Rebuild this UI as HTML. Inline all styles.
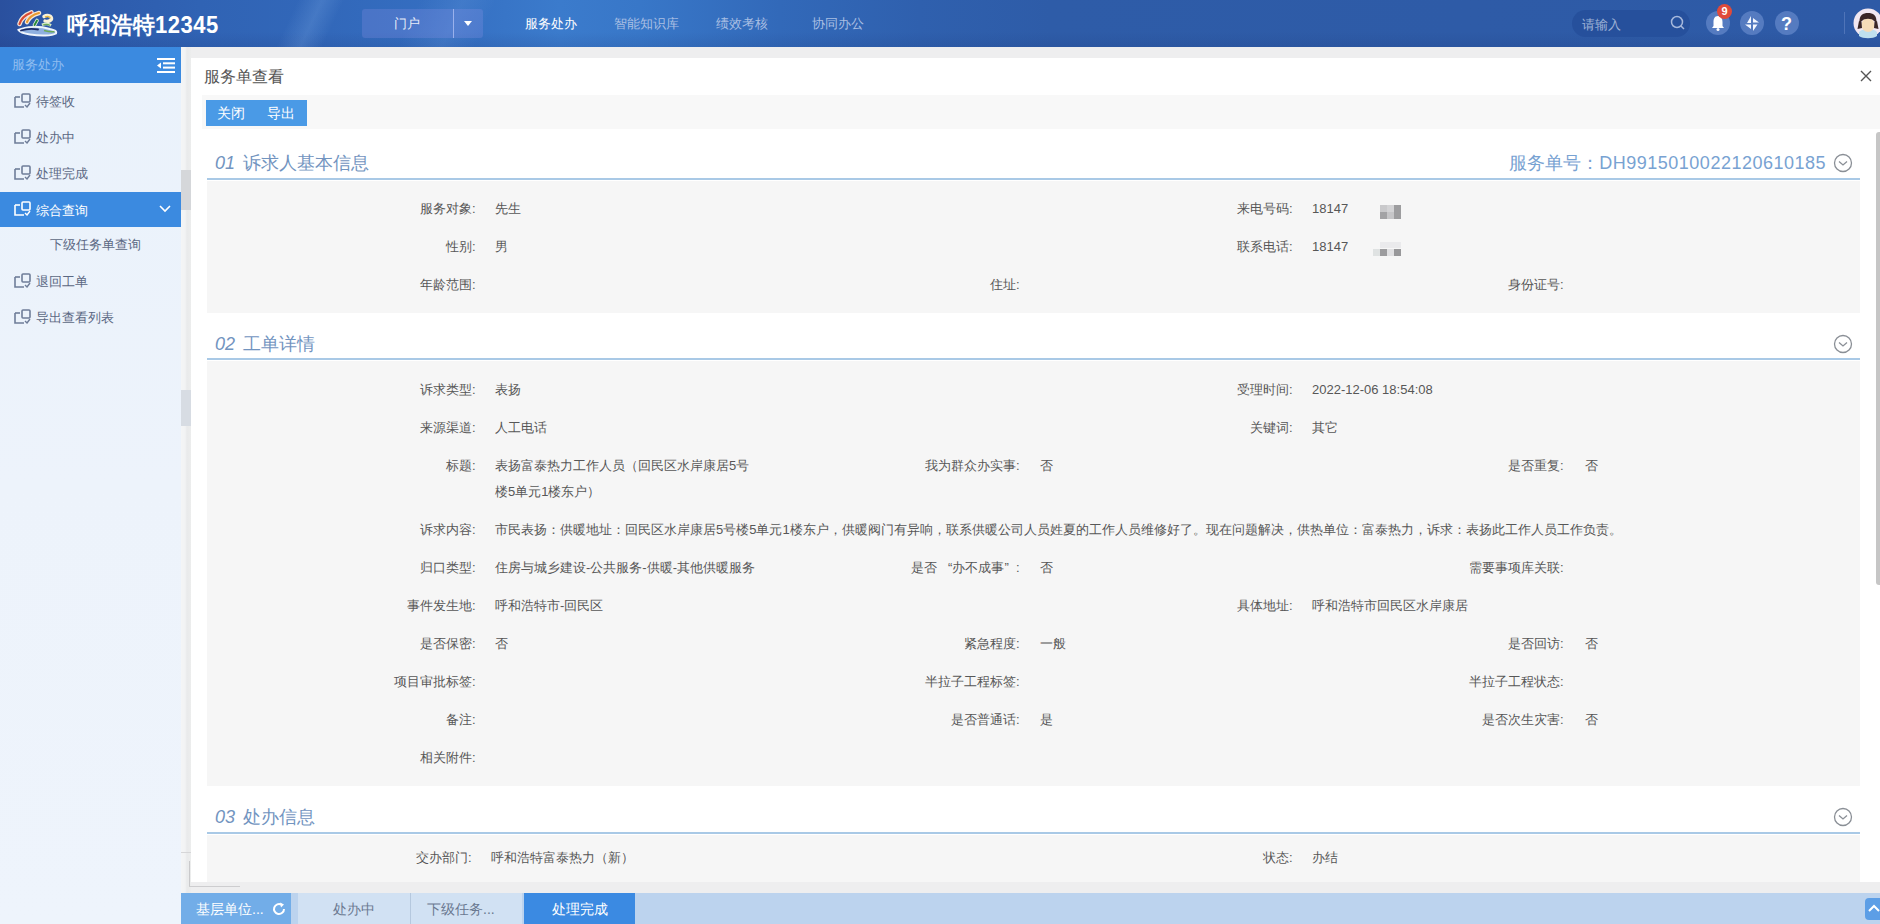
<!DOCTYPE html><html><head><meta charset="utf-8"><style>
*{margin:0;padding:0;box-sizing:border-box}
html,body{width:1880px;height:924px;overflow:hidden;font-family:"Liberation Sans",sans-serif;background:#eef0f3;position:relative}
div,span{position:absolute;white-space:nowrap}
#hdr{left:0;top:0;width:1880px;height:47px;background:linear-gradient(115deg,rgba(255,255,255,0) 270px,rgba(170,210,255,0.16) 292px,rgba(255,255,255,0) 312px),linear-gradient(115deg,rgba(255,255,255,0) 380px,rgba(170,210,255,0.10) 420px,rgba(255,255,255,0) 450px),linear-gradient(180deg,rgba(0,0,0,0) 32px,rgba(20,40,100,0.12) 47px),linear-gradient(90deg,#2a509e 0px,#2d5aab 70px,#3063b4 200px,#3268ba 330px,#356fc2 450px,#3b7bcc 560px,#3877c8 640px,#3269b9 780px,#2f60ae 920px,#2e5ca8 1050px,#2e5aa6 1880px);overflow:hidden}
#side{left:0;top:47px;width:181px;height:877px;background:linear-gradient(180deg,#eaf2fb 0%,#edf3fb 50%,#eef4fc 100%)}
#gut{left:181px;top:47px;width:1699px;height:846px;background:#eeeeef}
#panel{left:191px;top:58px;width:1689px;height:824px;background:#fff;overflow:hidden}
#tabs{left:181px;top:893px;width:1699px;height:31px;background:#bcd3ee}
.lbl{font-size:13px;color:#575757;line-height:16px}
.co{display:inline-block;width:6px;font-weight:normal;text-align:left}
.val{font-size:13px;color:#575757;line-height:16px}
.sh{font-size:18px;color:#7294bf;line-height:22px}
.sh i{font-style:italic;margin-right:8px}
.line{height:2px;background:#a9c9e6}
.sbody{background:#f6f6f6}
.mi{font-size:13px;color:#5b6883;line-height:16px}
u{text-decoration:none;display:inline-block;width:1em;text-align:center}
</style></head><body>
<div id="hdr">
<div style="left:362px;top:9px;width:121px;height:29px;background:rgba(150,150,235,0.24);border-radius:3px"></div>
<div style="left:453px;top:9px;width:1px;height:29px;background:rgba(200,210,255,0.6)"></div>
<div style="left:394px;top:16px;font-size:13px;line-height:16px;color:#e8ecf8"><u>门</u><u>户</u></div>
<div style="left:464px;top:21px;width:0;height:0;border-left:4px solid transparent;border-right:4px solid transparent;border-top:5px solid #fff"></div>
<div style="left:525px;top:16px;font-size:13px;line-height:16px;color:#ffffff"><u>服</u><u>务</u><u>处</u><u>办</u></div>
<div style="left:614px;top:16px;font-size:13px;line-height:16px;color:#a9bfe3"><u>智</u><u>能</u><u>知</u><u>识</u><u>库</u></div>
<div style="left:716px;top:16px;font-size:13px;line-height:16px;color:#a9bfe3"><u>绩</u><u>效</u><u>考</u><u>核</u></div>
<div style="left:812px;top:16px;font-size:13px;line-height:16px;color:#a9bfe3"><u>协</u><u>同</u><u>办</u><u>公</u></div>
<div style="left:67px;top:14px;font-size:22px;line-height:24px;color:#fff;font-weight:bold;letter-spacing:0.5px;transform:scaleY(1.05)"><u>呼</u><u>和</u><u>浩</u><u>特</u>12345</div>
<svg style="position:absolute;left:10px;top:5px" width="60" height="37" viewBox="10 5 60 37">
<path d="M18.5 30 C26 26 40 26 50 29 C54 30 57 31 56 33.5 C52 36 40 36 30 34.5 C24 33.5 20 32.5 18.5 30Z" fill="#8fb0e0" stroke="#eef4fc" stroke-width="2"/>
<path d="M21 30.5 C27 28.5 33 28.5 38 29.5" stroke="#1a2a66" stroke-width="1.8" fill="none" stroke-linecap="round"/>
<path d="M44 30.5 C48 31.5 52 32 54.5 31.5" stroke="#6aaa58" stroke-width="1.5" fill="none"/>
<path d="M19.5 24 C21 19 25 15 31.5 12.5" stroke="#f6e6d8" stroke-width="4.6" fill="none" stroke-linecap="round"/>
<path d="M27 22 C29 17 33 14.5 39 13" stroke="#f6e6d8" stroke-width="4.6" fill="none" stroke-linecap="round"/>
<path d="M19.5 24 C21 19 25 15 31.5 12.5" stroke="#d84a34" stroke-width="2.2" fill="none" stroke-linecap="round"/>
<path d="M27 22 C29 17 33 14.5 39 13" stroke="#e89a30" stroke-width="2.2" fill="none" stroke-linecap="round"/>
<path d="M44 16.5 C47 14.5 51 15.5 51.5 18 C52 20.5 48 22 45 21" stroke="#f8f0d8" stroke-width="3.4" fill="none" stroke-linecap="round"/>
<path d="M45 17 C47.5 16 50 16.5 50.3 18.3" stroke="#e6b840" stroke-width="1.4" fill="none"/>
<path d="M34.5 25 L37 20.5" stroke="#e6f2e0" stroke-width="3.6" stroke-linecap="round"/>
<path d="M34.5 25 L37 20.5" stroke="#2a8a3a" stroke-width="1.9" stroke-linecap="round"/>
<path d="M42 25 C45 23.5 48 23.5 51 25.5" stroke="#d6ecc8" stroke-width="2.8" fill="none"/>
<path d="M43 25 C45.5 24.2 48 24.2 50 25.5" stroke="#6aa858" stroke-width="1.3" fill="none"/>
</svg>
<div style="left:1572px;top:10px;width:118px;height:27px;border-radius:14px;background:#26509c"></div>
<div style="left:1582px;top:17px;font-size:13px;line-height:16px;color:#9fb2d6"><u>请</u><u>输</u><u>入</u></div>
<svg style="position:absolute;left:1670px;top:15px" width="16" height="16" viewBox="0 0 16 16"><circle cx="7" cy="7" r="5.5" stroke="#a6b8dc" stroke-width="1.5" fill="none"/><path d="M11 11 L14 14" stroke="#a6b8dc" stroke-width="1.5"/></svg>
<div style="left:1706px;top:11px;width:24px;height:24px;border-radius:12px;background:#557bc0"></div>
<div style="left:1740px;top:11px;width:24px;height:24px;border-radius:12px;background:#557bc0"></div>
<div style="left:1775px;top:11px;width:24px;height:24px;border-radius:12px;background:#557bc0"></div>
<svg style="position:absolute;left:1710px;top:15px" width="16" height="16" viewBox="0 0 16 16"><path d="M8 1 C4.5 1 3.5 4 3.5 7 L3.5 11 L2 13 L14 13 L12.5 11 L12.5 7 C12.5 4 11.5 1 8 1Z" fill="#fff"/><circle cx="8" cy="14.5" r="1.5" fill="#fff"/></svg>
<div style="left:1717px;top:4px;width:15px;height:15px;border-radius:8px;background:#e04a3a;color:#fff;font-size:11px;line-height:15px;text-align:center;font-weight:bold">9</div>
<svg style="position:absolute;left:1744px;top:15px" width="16" height="17" viewBox="1744 15 16 17"><path d="M1751 16 L1751 23 L1747 23Z M1753 18 L1759 22.6 L1753 22.6Z M1745 24.4 L1751 24.4 L1751 29Z M1753 24.4 L1757.5 24.4 L1753 31Z" fill="#f4f8ff"/></svg>
<div style="left:1781px;top:13px;font-size:18px;line-height:22px;color:#fff;font-weight:bold">?</div>
<div style="left:1844px;top:12px;width:1px;height:22px;background:#4f74b8"></div>
<svg style="position:absolute;left:1853px;top:8px" width="27" height="31" viewBox="0 0 27 31">
<circle cx="15" cy="15" r="14.5" fill="#f1e7f1"/>
<path d="M6 24 C9 20 21 20 24 24 L24 28 C20 31 10 31 6 28Z" fill="#bfe0ee"/>
<ellipse cx="15" cy="17" rx="6.5" ry="7" fill="#f6dcb8"/>
<path d="M6.5 15 C6 7 10 5 15 5 C20 5 24 7 23.5 15 L21 13 C19 10 11 10 9 13Z" fill="#3a2626"/>
<path d="M6 13 L4.5 21 L9 20 L8.5 14Z M24 13 L25.5 21 L21 20 L21.5 14Z" fill="#3a2626"/>
</svg>
</div>
<div id="side">
<div style="left:0;top:0;width:181px;height:36px;background:#3b8ae0"></div>
<div style="left:12px;top:10px;font-size:13px;line-height:16px;color:#8fbdf0"><u>服</u><u>务</u><u>处</u><u>办</u></div>
<svg style="position:absolute;left:157px;top:11px" width="19" height="15" viewBox="0 0 19 15"><rect x="0" y="0" width="18" height="2" fill="#fff"/><rect x="6" y="4.3" width="12" height="2" fill="#fff"/><rect x="6" y="8.6" width="12" height="2" fill="#fff"/><rect x="0" y="13" width="18" height="2" fill="#fff"/><path d="M0 7.5 L4 4.5 L4 10.5Z" fill="#fff"/></svg>
<svg style="position:absolute;left:14px;top:46px" width="17" height="15" viewBox="0 0 17 15"><path d="M1 4 L1 14 L10 14" stroke="#6f7d99" stroke-width="1.6" fill="none"/><path d="M1 4 L6 4" stroke="#6f7d99" stroke-width="1.6"/><rect x="8" y="1" width="8" height="8" rx="1" stroke="#6f7d99" stroke-width="1.6" fill="none"/><path d="M11 12 L13 14 L16 10" stroke="#6f7d99" stroke-width="1.4" fill="none"/></svg>
<div class="mi" style="left:36px;top:47px"><u>待</u><u>签</u><u>收</u></div>
<svg style="position:absolute;left:14px;top:82px" width="17" height="15" viewBox="0 0 17 15"><path d="M1 4 L1 14 L10 14" stroke="#6f7d99" stroke-width="1.6" fill="none"/><path d="M1 4 L6 4" stroke="#6f7d99" stroke-width="1.6"/><rect x="8" y="1" width="8" height="8" rx="1" stroke="#6f7d99" stroke-width="1.6" fill="none"/><path d="M11 12 L13 14 L16 10" stroke="#6f7d99" stroke-width="1.4" fill="none"/></svg>
<div class="mi" style="left:36px;top:83px"><u>处</u><u>办</u><u>中</u></div>
<svg style="position:absolute;left:14px;top:118px" width="17" height="15" viewBox="0 0 17 15"><path d="M1 4 L1 14 L10 14" stroke="#6f7d99" stroke-width="1.6" fill="none"/><path d="M1 4 L6 4" stroke="#6f7d99" stroke-width="1.6"/><rect x="8" y="1" width="8" height="8" rx="1" stroke="#6f7d99" stroke-width="1.6" fill="none"/><path d="M11 12 L13 14 L16 10" stroke="#6f7d99" stroke-width="1.4" fill="none"/></svg>
<div class="mi" style="left:36px;top:119px"><u>处</u><u>理</u><u>完</u><u>成</u></div>
<div style="left:0;top:145px;width:181px;height:35px;background:#3b8ae0"></div>
<svg style="position:absolute;left:14px;top:154px" width="17" height="15" viewBox="0 0 17 15"><path d="M1 4 L1 14 L10 14" stroke="#ffffff" stroke-width="1.6" fill="none"/><path d="M1 4 L6 4" stroke="#ffffff" stroke-width="1.6"/><rect x="8" y="1" width="8" height="8" rx="1" stroke="#ffffff" stroke-width="1.6" fill="none"/><path d="M11 12 L13 14 L16 10" stroke="#ffffff" stroke-width="1.4" fill="none"/></svg>
<div class="mi" style="left:36px;top:156px;color:#fff"><u>综</u><u>合</u><u>查</u><u>询</u></div>
<svg style="position:absolute;left:159px;top:158px" width="12" height="8" viewBox="0 0 12 8"><path d="M1 1 L6 6 L11 1" stroke="#fff" stroke-width="1.6" fill="none"/></svg>
<div class="mi" style="left:50px;top:190px"><u>下</u><u>级</u><u>任</u><u>务</u><u>单</u><u>查</u><u>询</u></div>
<svg style="position:absolute;left:14px;top:226px" width="17" height="15" viewBox="0 0 17 15"><path d="M1 4 L1 14 L10 14" stroke="#6f7d99" stroke-width="1.6" fill="none"/><path d="M1 4 L6 4" stroke="#6f7d99" stroke-width="1.6"/><rect x="8" y="1" width="8" height="8" rx="1" stroke="#6f7d99" stroke-width="1.6" fill="none"/><path d="M11 12 L13 14 L16 10" stroke="#6f7d99" stroke-width="1.4" fill="none"/></svg>
<div class="mi" style="left:36px;top:227px"><u>退</u><u>回</u><u>工</u><u>单</u></div>
<svg style="position:absolute;left:14px;top:262px" width="17" height="15" viewBox="0 0 17 15"><path d="M1 4 L1 14 L10 14" stroke="#6f7d99" stroke-width="1.6" fill="none"/><path d="M1 4 L6 4" stroke="#6f7d99" stroke-width="1.6"/><rect x="8" y="1" width="8" height="8" rx="1" stroke="#6f7d99" stroke-width="1.6" fill="none"/><path d="M11 12 L13 14 L16 10" stroke="#6f7d99" stroke-width="1.4" fill="none"/></svg>
<div class="mi" style="left:36px;top:263px"><u>导</u><u>出</u><u>查</u><u>看</u><u>列</u><u>表</u></div>
</div>
<div id="gut"></div>
<div style="left:181px;top:47px;width:10px;height:846px;background:linear-gradient(90deg,#f4f5f6 0,#f2f3f4 4px,#e9eaeb 6px,#eceded 10px)"></div>
<div style="left:181px;top:170px;width:10px;height:40px;background:#d5d7da"></div>
<div style="left:181px;top:390px;width:10px;height:36px;background:#d7dce3"></div>
<div style="left:189px;top:861px;width:1px;height:26px;background:#c9c9cb"></div>
<div style="left:189px;top:886px;width:51px;height:1px;background:#cdcdcf"></div>
<div style="left:181px;top:852px;width:10px;height:1px;background:#d6d6d8"></div>
<div id="panel">
<div class="" style="left:13px;top:10px;font-size:16px;line-height:18px;color:#555"><u>服</u><u>务</u><u>单</u><u>查</u><u>看</u></div>
<svg style="position:absolute;left:1669px;top:12px" width="12" height="12" viewBox="0 0 12 12"><path d="M1 1 L11 11 M11 1 L1 11" stroke="#555" stroke-width="1.4"/></svg>
<div style="left:11px;top:37px;width:1700px;height:34px;background:#f8f8f8"></div>
<div style="left:15px;top:42px;width:101px;height:26px;background:#4a9ae6"></div>
<div class="" style="left:26px;top:47px;font-size:14px;line-height:16px;color:#fff"><u>关</u><u>闭</u></div>
<div class="" style="left:76px;top:47px;font-size:14px;line-height:16px;color:#fff"><u>导</u><u>出</u></div>
<div style="left:1685px;top:74px;width:6px;height:453px;background:#c6c6c6;border-radius:3px 0 0 3px"></div>
<div class="line" style="left:16px;top:120px;width:1653px"></div>
<div class="sbody" style="left:16px;top:123px;width:1653px;height:132px"></div>
<div class="sh" style="left:24px;top:94px;"><i>01</i><u>诉</u><u>求</u><u>人</u><u>基</u><u>本</u><u>信</u><u>息</u></div>
<div class="sh" style="right:54px;top:94px;color:#78a2d2;letter-spacing:0.5px"><u>服</u><u>务</u><u>单</u><u>号</u><u>：</u>DH9915010022120610185</div>
<svg style="position:absolute;left:1642px;top:95px" width="20" height="20" viewBox="0 0 20 20"><circle cx="10" cy="10" r="8.5" stroke="#8a8f96" stroke-width="1.3" fill="none"/><path d="M6 8.5 L10 12 L14 8.5" stroke="#8a8f96" stroke-width="1.3" fill="none"/></svg>
<div class="line" style="left:16px;top:300px;width:1653px"></div>
<div class="sbody" style="left:16px;top:303px;width:1653px;height:425px"></div>
<div class="sh" style="left:24px;top:275px;"><i>02</i><u>工</u><u>单</u><u>详</u><u>情</u></div>
<svg style="position:absolute;left:1642px;top:276px" width="20" height="20" viewBox="0 0 20 20"><circle cx="10" cy="10" r="8.5" stroke="#8a8f96" stroke-width="1.3" fill="none"/><path d="M6 8.5 L10 12 L14 8.5" stroke="#8a8f96" stroke-width="1.3" fill="none"/></svg>
<div class="line" style="left:16px;top:774px;width:1653px"></div>
<div class="sbody" style="left:16px;top:777px;width:1653px;height:65px"></div>
<div class="sh" style="left:24px;top:748px;"><i>03</i><u>处</u><u>办</u><u>信</u><u>息</u></div>
<svg style="position:absolute;left:1642px;top:749px" width="20" height="20" viewBox="0 0 20 20"><circle cx="10" cy="10" r="8.5" stroke="#8a8f96" stroke-width="1.3" fill="none"/><path d="M6 8.5 L10 12 L14 8.5" stroke="#8a8f96" stroke-width="1.3" fill="none"/></svg>
<div class="lbl" style="right:1402px;top:143px;"><u>服</u><u>务</u><u>对</u><u>象</u><b class="co">:</b></div>
<div class="val" style="left:304px;top:143px;"><u>先</u><u>生</u></div>
<div class="lbl" style="right:585px;top:143px;"><u>来</u><u>电</u><u>号</u><u>码</u><b class="co">:</b></div>
<div class="val" style="left:1121px;top:143px;">18147</div>
<div class="lbl" style="right:1402px;top:181px;"><u>性</u><u>别</u><b class="co">:</b></div>
<div class="val" style="left:304px;top:181px;"><u>男</u></div>
<div class="lbl" style="right:585px;top:181px;"><u>联</u><u>系</u><u>电</u><u>话</u><b class="co">:</b></div>
<div class="val" style="left:1121px;top:181px;">18147</div>
<div class="lbl" style="right:1402px;top:219px;"><u>年</u><u>龄</u><u>范</u><u>围</u><b class="co">:</b></div>
<div class="lbl" style="right:858px;top:219px;"><u>住</u><u>址</u><b class="co">:</b></div>
<div class="lbl" style="right:314px;top:219px;"><u>身</u><u>份</u><u>证</u><u>号</u><b class="co">:</b></div>
<div style="left:1189px;top:147px;width:7px;height:7px;background:#c9c9cb"></div>
<div style="left:1196px;top:147px;width:7px;height:7px;background:#d3d3d5"></div>
<div style="left:1203px;top:147px;width:7px;height:14px;background:#9d9d9f"></div>
<div style="left:1189px;top:154px;width:7px;height:7px;background:#a3a3a5"></div>
<div style="left:1196px;top:154px;width:7px;height:7px;background:#c6c6c8"></div>
<div style="left:1182px;top:191px;width:7px;height:7px;background:#dfe2e2"></div>
<div style="left:1189px;top:184px;width:21px;height:6px;background:#eaeaec"></div>
<div style="left:1189px;top:191px;width:7px;height:7px;background:#9c9c9e"></div>
<div style="left:1196px;top:191px;width:7px;height:7px;background:#e0e0e2"></div>
<div style="left:1203px;top:191px;width:7px;height:7px;background:#98989a"></div>
<div class="lbl" style="right:1402px;top:324px;"><u>诉</u><u>求</u><u>类</u><u>型</u><b class="co">:</b></div>
<div class="val" style="left:304px;top:324px;"><u>表</u><u>扬</u></div>
<div class="lbl" style="right:585px;top:324px;"><u>受</u><u>理</u><u>时</u><u>间</u><b class="co">:</b></div>
<div class="val" style="left:1121px;top:324px;">2022-12-06 18:54:08</div>
<div class="lbl" style="right:1402px;top:362px;"><u>来</u><u>源</u><u>渠</u><u>道</u><b class="co">:</b></div>
<div class="val" style="left:304px;top:362px;"><u>人</u><u>工</u><u>电</u><u>话</u></div>
<div class="lbl" style="right:585px;top:362px;"><u>关</u><u>键</u><u>词</u><b class="co">:</b></div>
<div class="val" style="left:1121px;top:362px;"><u>其</u><u>它</u></div>
<div class="lbl" style="right:1402px;top:400px;"><u>标</u><u>题</u><b class="co">:</b></div>
<div class="val" style="left:304px;top:400px;"><u>表</u><u>扬</u><u>富</u><u>泰</u><u>热</u><u>力</u><u>工</u><u>作</u><u>人</u><u>员</u><u>（</u><u>回</u><u>民</u><u>区</u><u>水</u><u>岸</u><u>康</u><u>居</u>5<u>号</u></div>
<div class="lbl" style="right:858px;top:400px;"><u>我</u><u>为</u><u>群</u><u>众</u><u>办</u><u>实</u><u>事</u><b class="co">:</b></div>
<div class="val" style="left:849px;top:400px;"><u>否</u></div>
<div class="lbl" style="right:314px;top:400px;"><u>是</u><u>否</u><u>重</u><u>复</u><b class="co">:</b></div>
<div class="val" style="left:1394px;top:400px;"><u>否</u></div>
<div class="val" style="left:304px;top:426px;"><u>楼</u>5<u>单</u><u>元</u>1<u>楼</u><u>东</u><u>户</u><u>）</u></div>
<div class="lbl" style="right:1402px;top:464px;"><u>诉</u><u>求</u><u>内</u><u>容</u><b class="co">:</b></div>
<div class="val" style="left:304px;top:464px;"><u>市</u><u>民</u><u>表</u><u>扬</u><u>：</u><u>供</u><u>暖</u><u>地</u><u>址</u><u>：</u><u>回</u><u>民</u><u>区</u><u>水</u><u>岸</u><u>康</u><u>居</u>5<u>号</u><u>楼</u>5<u>单</u><u>元</u>1<u>楼</u><u>东</u><u>户</u><u>，</u><u>供</u><u>暖</u><u>阀</u><u>门</u><u>有</u><u>异</u><u>响</u><u>，</u><u>联</u><u>系</u><u>供</u><u>暖</u><u>公</u><u>司</u><u>人</u><u>员</u><u>姓</u><u>夏</u><u>的</u><u>工</u><u>作</u><u>人</u><u>员</u><u>维</u><u>修</u><u>好</u><u>了</u><u>。</u><u>现</u><u>在</u><u>问</u><u>题</u><u>解</u><u>决</u><u>，</u><u>供</u><u>热</u><u>单</u><u>位</u><u>：</u><u>富</u><u>泰</u><u>热</u><u>力</u><u>，</u><u>诉</u><u>求</u><u>：</u><u>表</u><u>扬</u><u>此</u><u>工</u><u>作</u><u>人</u><u>员</u><u>工</u><u>作</u><u>负</u><u>责</u><u>。</u></div>
<div class="lbl" style="right:1402px;top:502px;"><u>归</u><u>口</u><u>类</u><u>型</u><b class="co">:</b></div>
<div class="val" style="left:304px;top:502px;"><u>住</u><u>房</u><u>与</u><u>城</u><u>乡</u><u>建</u><u>设</u>-<u>公</u><u>共</u><u>服</u><u>务</u>-<u>供</u><u>暖</u>-<u>其</u><u>他</u><u>供</u><u>暖</u><u>服</u><u>务</u></div>
<div class="lbl" style="right:858px;top:502px;"><u>是</u><u>否</u>&nbsp;&nbsp;&nbsp;“<u>办</u><u>不</u><u>成</u><u>事</u>”&nbsp;&nbsp;<b class="co">:</b></div>
<div class="val" style="left:849px;top:502px;"><u>否</u></div>
<div class="lbl" style="right:314px;top:502px;"><u>需</u><u>要</u><u>事</u><u>项</u><u>库</u><u>关</u><u>联</u><b class="co">:</b></div>
<div class="lbl" style="right:1402px;top:540px;"><u>事</u><u>件</u><u>发</u><u>生</u><u>地</u><b class="co">:</b></div>
<div class="val" style="left:304px;top:540px;"><u>呼</u><u>和</u><u>浩</u><u>特</u><u>市</u>-<u>回</u><u>民</u><u>区</u></div>
<div class="lbl" style="right:585px;top:540px;"><u>具</u><u>体</u><u>地</u><u>址</u><b class="co">:</b></div>
<div class="val" style="left:1121px;top:540px;"><u>呼</u><u>和</u><u>浩</u><u>特</u><u>市</u><u>回</u><u>民</u><u>区</u><u>水</u><u>岸</u><u>康</u><u>居</u></div>
<div class="lbl" style="right:1402px;top:578px;"><u>是</u><u>否</u><u>保</u><u>密</u><b class="co">:</b></div>
<div class="val" style="left:304px;top:578px;"><u>否</u></div>
<div class="lbl" style="right:858px;top:578px;"><u>紧</u><u>急</u><u>程</u><u>度</u><b class="co">:</b></div>
<div class="val" style="left:849px;top:578px;"><u>一</u><u>般</u></div>
<div class="lbl" style="right:314px;top:578px;"><u>是</u><u>否</u><u>回</u><u>访</u><b class="co">:</b></div>
<div class="val" style="left:1394px;top:578px;"><u>否</u></div>
<div class="lbl" style="right:1402px;top:616px;"><u>项</u><u>目</u><u>审</u><u>批</u><u>标</u><u>签</u><b class="co">:</b></div>
<div class="lbl" style="right:858px;top:616px;"><u>半</u><u>拉</u><u>子</u><u>工</u><u>程</u><u>标</u><u>签</u><b class="co">:</b></div>
<div class="lbl" style="right:314px;top:616px;"><u>半</u><u>拉</u><u>子</u><u>工</u><u>程</u><u>状</u><u>态</u><b class="co">:</b></div>
<div class="lbl" style="right:1402px;top:654px;"><u>备</u><u>注</u><b class="co">:</b></div>
<div class="lbl" style="right:858px;top:654px;"><u>是</u><u>否</u><u>普</u><u>通</u><u>话</u><b class="co">:</b></div>
<div class="val" style="left:849px;top:654px;"><u>是</u></div>
<div class="lbl" style="right:314px;top:654px;"><u>是</u><u>否</u><u>次</u><u>生</u><u>灾</u><u>害</u><b class="co">:</b></div>
<div class="val" style="left:1394px;top:654px;"><u>否</u></div>
<div class="lbl" style="right:1402px;top:692px;"><u>相</u><u>关</u><u>附</u><u>件</u><b class="co">:</b></div>
<div class="lbl" style="right:1406px;top:792px;"><u>交</u><u>办</u><u>部</u><u>门</u><b class="co">:</b></div>
<div class="val" style="left:300px;top:792px;"><u>呼</u><u>和</u><u>浩</u><u>特</u><u>富</u><u>泰</u><u>热</u><u>力</u><u>（</u><u>新</u><u>）</u></div>
<div class="lbl" style="right:585px;top:792px;"><u>状</u><u>态</u><b class="co">:</b></div>
<div class="val" style="left:1121px;top:792px;"><u>办</u><u>结</u></div>
</div>
<div id="tabs">
<div style="left:0;top:0;width:110px;height:31px;background:#72ade8"></div>
<div style="left:15px;top:8px;font-size:14px;line-height:16px;color:#fff"><u>基</u><u>层</u><u>单</u><u>位</u>...</div>
<svg style="position:absolute;left:91px;top:9px" width="14" height="14" viewBox="0 0 14 14"><path d="M12 7 A5 5 0 1 1 9.5 2.7" stroke="#fff" stroke-width="2" fill="none"/><path d="M8 0.5 L12 2.5 L9 5.5Z" fill="#fff"/></svg>
<div style="left:117px;top:0;width:112px;height:31px;background:#d1e1f3"></div>
<div style="left:229px;top:0;width:1px;height:31px;background:#b5c8de"></div>
<div style="left:230px;top:0;width:111px;height:31px;background:#d1e1f3"></div>
<div style="left:152px;top:8px;font-size:14px;line-height:16px;color:#6a7890"><u>处</u><u>办</u><u>中</u></div>
<div style="left:246px;top:8px;font-size:14px;line-height:16px;color:#6a7890"><u>下</u><u>级</u><u>任</u><u>务</u>...</div>
<div style="left:343px;top:0;width:111px;height:31px;background:#3b8ae2"></div>
<div style="left:371px;top:8px;font-size:14px;line-height:16px;color:#fff"><u>处</u><u>理</u><u>完</u><u>成</u></div>
<div style="left:1684px;top:5px;width:20px;height:22px;border-radius:4px;background:#5c9ee6"></div>
<svg style="position:absolute;left:1686px;top:10px" width="14" height="10" viewBox="0 0 14 10"><path d="M2 8 L7 3 L12 8" stroke="#fff" stroke-width="2" fill="none"/></svg>
</div>
</body></html>
